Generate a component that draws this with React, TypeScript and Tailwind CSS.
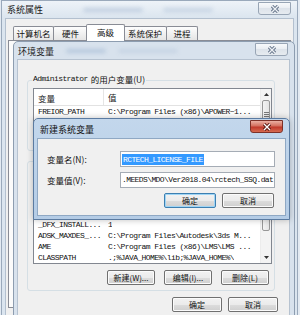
import React from 'react';

const cjk = "font-['Noto_Sans_CJK_SC','Noto_Sans',sans-serif]";
const mono = "font-['Liberation_Mono','Noto_Sans_CJK_SC',monospace] text-[8px] tracking-[-0.6px]";

const CloseButton = ({active}: {active?: boolean}) => (
  <div
    className={`absolute right-[6px] top-px flex h-[13px] w-[33px] items-center justify-center rounded-b-[3px] border ${
      active
        ? 'border-[#7d3128] bg-[linear-gradient(#eab0a3,#d4705f_45%,#c0392b_55%,#d66a50)]'
        : 'border-[#98a5b5] bg-[linear-gradient(#f7f9fb,#e9edf2_50%,#dde3ea_50%,#e6ebf0)]'
    }`}
  >
    <svg width="10" height="8" viewBox="0 0 10 8">
      <path d="M2 1 L8 7 M8 1 L2 7" stroke={active ? '#5a1a12' : '#66758a'} strokeWidth="3.2" />
      <path d="M2 1 L8 7 M8 1 L2 7" stroke={active ? '#ffffff' : '#eef1f5'} strokeWidth="1.3" />
    </svg>
  </div>
);

const Btn = ({label, className, primary}: {label: string; className: string; primary?: boolean}) => (
  <div
    className={`flex h-[15px] items-center justify-center rounded-[2px] border bg-[linear-gradient(#f2f2f2,#ebebeb_50%,#dddddd_50%,#cfcfcf)] ${cjk} text-[8px] leading-none text-[#111] ${
      primary ? 'border-[#3c7fb1] shadow-[inset_0_0_0_1px_#9fd5f5]' : 'border-[#707070] shadow-[inset_0_0_0_1px_#fbfbfb]'
    } ${className}`}
  >
    {label}
  </div>
);

const Row = ({name, value}: {name: string; value: string}) => (
  <div className={`flex h-[11px] items-center leading-none text-[#111] ${mono}`}>
    <span className="w-[70px] shrink-0 overflow-hidden whitespace-nowrap pl-[4px]">{name}</span>
    <span className="overflow-hidden whitespace-nowrap pl-[4px]">{value}</span>
  </div>
);

// rows hidden behind the dialog
const Blank = () => <div className="h-[11px]" />;

const Arrow = ({down}: {down?: boolean}) => (
  <div className="flex h-[11px] w-[11px] items-center justify-center">
    <svg width="5" height="3" viewBox="0 0 5 3">
      <path d={down ? 'M0 0 H5 L2.5 3 Z' : 'M0 3 H5 L2.5 0 Z'} fill="#333" />
    </svg>
  </div>
);

const Thumb = ({h}: {h: string}) => (
  <div className={`mx-px flex items-center justify-center rounded-[2px] border border-[#979797] bg-[linear-gradient(90deg,#f3f3f3,#e4e4e4)] ${h}`}>
    <div className="flex flex-col gap-px">
      <div className="h-px w-[5px] bg-[#777]" />
      <div className="h-px w-[5px] bg-[#777]" />
      <div className="h-px w-[5px] bg-[#777]" />
    </div>
  </div>
);

const Header = () => (
  <div className={`flex h-[17px] shrink-0 items-center border-b border-[#e2e2e2] ${cjk} text-[8.5px] leading-none text-[#222]`}>
    <span className="h-full w-[70px] shrink-0 border-r border-[#e5e5e5] pl-[4px] pt-[5px]">变量</span>
    <span className="pl-[4px]">值</span>
  </div>
);

export default function App() {
  return (
    <div className="relative h-[315px] w-[300px] overflow-hidden bg-[#e3eaf2]">
      {/* 系统属性 */}
      <div className="absolute left-px top-0 flex h-[340px] w-[297px] flex-col border border-[#9aa9bb] bg-[#dbe5ef]">
        <div className="relative flex h-[17px] shrink-0 items-center bg-[linear-gradient(#eef3f8,#dbe5ef)] pl-[5px]">
          <span className={`${cjk} text-[9px] leading-none text-[#1a1a1a]`}>系统属性</span>
          <div className="ml-[40px] h-[4px] w-[60px] rounded-full bg-[#a9bcd4] opacity-60 blur-[2px]" />
          <div className="ml-[20px] h-[4px] w-[50px] rounded-full bg-[#a9bcd4] opacity-50 blur-[2px]" />
          <CloseButton />
        </div>
        <div className="mx-[3px] flex-1 border border-[#b3c0cf] bg-[#f0f0f0]">
          <div className={`flex h-[21px] items-end pl-[7px] ${cjk} text-[8.5px] leading-none text-[#111]`}>
            <div className="flex h-[14px] w-[41px] items-center justify-center rounded-t-[2px] border border-b-0 border-[#898c95] bg-[linear-gradient(#fdfdfd,#e5e5e5)]">计算机名</div>
            <div className="-ml-px flex h-[14px] w-[35px] items-center justify-center rounded-t-[2px] border border-b-0 border-[#898c95] bg-[linear-gradient(#fdfdfd,#e5e5e5)]">硬件</div>
            <div className="relative z-10 -mb-px -ml-[2px] flex h-[17px] w-[39px] items-center justify-center rounded-t-[2px] border border-b-0 border-[#898c95] bg-white pb-[2px]">高级</div>
            <div className="-ml-[2px] flex h-[14px] w-[44px] items-center justify-center rounded-t-[2px] border border-b-0 border-[#898c95] bg-[linear-gradient(#fdfdfd,#e5e5e5)]">系统保护</div>
            <div className="-ml-px flex h-[14px] w-[32px] items-center justify-center rounded-t-[2px] border border-b-0 border-[#898c95] bg-[linear-gradient(#fdfdfd,#e5e5e5)]">进程</div>
          </div>
          <div className="mx-[2px] h-[268px] border border-[#898c95] bg-[#fbfbfb]" />
        </div>
      </div>

      {/* 环境变量 */}
      <div className="absolute left-[13px] top-[41px] h-[300px] w-[282px] rounded-t-[5px] border border-[#8d9db0] bg-[#d8e2ed]">
        <div className="relative flex h-[18px] items-center pl-[4px]">
          <span className={`${cjk} text-[9px] leading-none text-[#1a1a1a]`}>环境变量</span>
          <div className="ml-[12px] h-[4px] w-[40px] rounded-full bg-[#9fb6d2] opacity-60 blur-[2px]" />
          <div className="ml-[12px] h-[4px] w-[60px] rounded-full bg-[#b3c5da] opacity-50 blur-[2px]" />
          <CloseButton />
        </div>
        <div className="ml-[4px] h-[280px] w-[271px] bg-[#f0f0f0] pt-[20px] shadow-[0_0_0_1px_#b6c2d0]">
          {/* user vars */}
          <div className="relative ml-[9px] h-[71px] w-[248px] rounded-[3px] border border-[#d5dfe5]">
            <div className="absolute -top-[6px] left-[4px] flex items-center bg-[#f0f0f0] px-px leading-none text-[#111]">
              <span className={mono}>Administrator</span>
              <span className={`${cjk} ml-[3px] text-[8.5px]`}>的用户变量(U)</span>
            </div>
            <div className="ml-[5px] mt-[7px] flex h-[55px] w-[239px] border border-[#828790] bg-white">
              <div className="flex flex-1 flex-col overflow-hidden">
                <Header />
                <Row name="FREIOR_PATH" value="C:\Program Files (x86)\APOWER~1..." />
              </div>
              <div className="flex w-[11px] flex-col border-l border-[#ececec] bg-[#f3f3f3]">
                <Arrow />
                <Thumb h="h-[29px]" />
              </div>
            </div>
          </div>

          {/* system vars, top part hidden behind the dialog */}
          <div className="relative ml-[9px] mt-[10px] h-[130px] w-[248px] rounded-[3px] border border-[#d5dfe5]">
            <div className="ml-[5px] mt-[7px] flex h-[95px] w-[239px] border border-[#828790] bg-white">
              <div className="flex flex-1 flex-col overflow-hidden">
                <div className="h-[17px] shrink-0 border-b border-[#e2e2e2]" />
                <Blank />
                <Blank />
                <Blank />
                <Row name="_DFX_INSTALL..." value="1" />
                <Row name="ADSK_MAXDES_..." value="C:\Program Files\Autodesk\3ds M..." />
                <Row name="AME" value="C:\Program Files (x86)\LMS\LMS ..." />
                <Row name="CLASSPATH" value=".;%JAVA_HOME%\lib;%JAVA_HOME%\" />
              </div>
              <div className="flex w-[11px] flex-col border-l border-[#ececec] bg-[#f3f3f3]">
                <Arrow />
                <div className="h-[20px]" />
                <Thumb h="h-[30px]" />
                <div className="flex-1" />
                <Arrow down />
              </div>
            </div>
            <div className="mt-[6px] flex justify-end gap-[9px] pr-[5px]">
              <Btn label="新建(W)..." className="w-[48px]" />
              <Btn label="编辑(I)..." className="w-[48px]" />
              <Btn label="删除(L)" className="w-[48px]" />
            </div>
          </div>

          <div className="mt-[6px] flex justify-end gap-[6px] pr-[11px]">
            <Btn label="确定" className="w-[50px]" />
            <Btn label="取消" className="w-[50px]" />
          </div>
        </div>
      </div>

      {/* 新建系统变量 */}
      <div className="absolute left-[33px] top-[118px] h-[102px] w-[257px] rounded-t-[5px] border border-[#5b7ba1] bg-[linear-gradient(#c3d7ec,#b4cce6)] shadow-[0_0_6px_rgba(0,0,0,0.25)]">
        <div className="relative flex h-[20px] items-center pl-[6px]">
          <span className={`${cjk} text-[9px] leading-none text-[#111]`}>新建系统变量</span>
          <CloseButton active />
        </div>
        <div className="ml-[4px] h-[76px] w-[247px] bg-[#f0f0f0] pt-[12px] shadow-[0_0_0_1px_#8fa8c4]">
          <div className="flex items-center">
            <span className={`w-[82px] pl-[9px] ${cjk} text-[8.5px] leading-none text-[#111]`}>变量名(N):</span>
            <div className="flex h-[16px] w-[155px] items-center border border-[#a5acb5] bg-white pl-px">
              <span className={`bg-[#3399ff] px-px leading-[11px] text-white ${mono}`}>RCTECH_LICENSE_FILE</span>
            </div>
          </div>
          <div className="mt-[5px] flex items-center">
            <span className={`w-[82px] pl-[9px] ${cjk} text-[8.5px] leading-none text-[#111]`}>变量值(V):</span>
            <div className="flex h-[16px] w-[155px] items-center overflow-hidden border border-[#a5acb5] bg-white pl-px">
              <span className={`whitespace-nowrap leading-none text-[#111] ${mono}`}>.MEEDS\MDO\Ver2018.04\rctech_SSQ.dat</span>
            </div>
          </div>
          <div className="mt-[5px] flex justify-end gap-[6px] pr-[11px]">
            <Btn label="确定" className="w-[52px]" primary />
            <Btn label="取消" className="w-[52px]" />
          </div>
        </div>
      </div>
    </div>
  );
}
